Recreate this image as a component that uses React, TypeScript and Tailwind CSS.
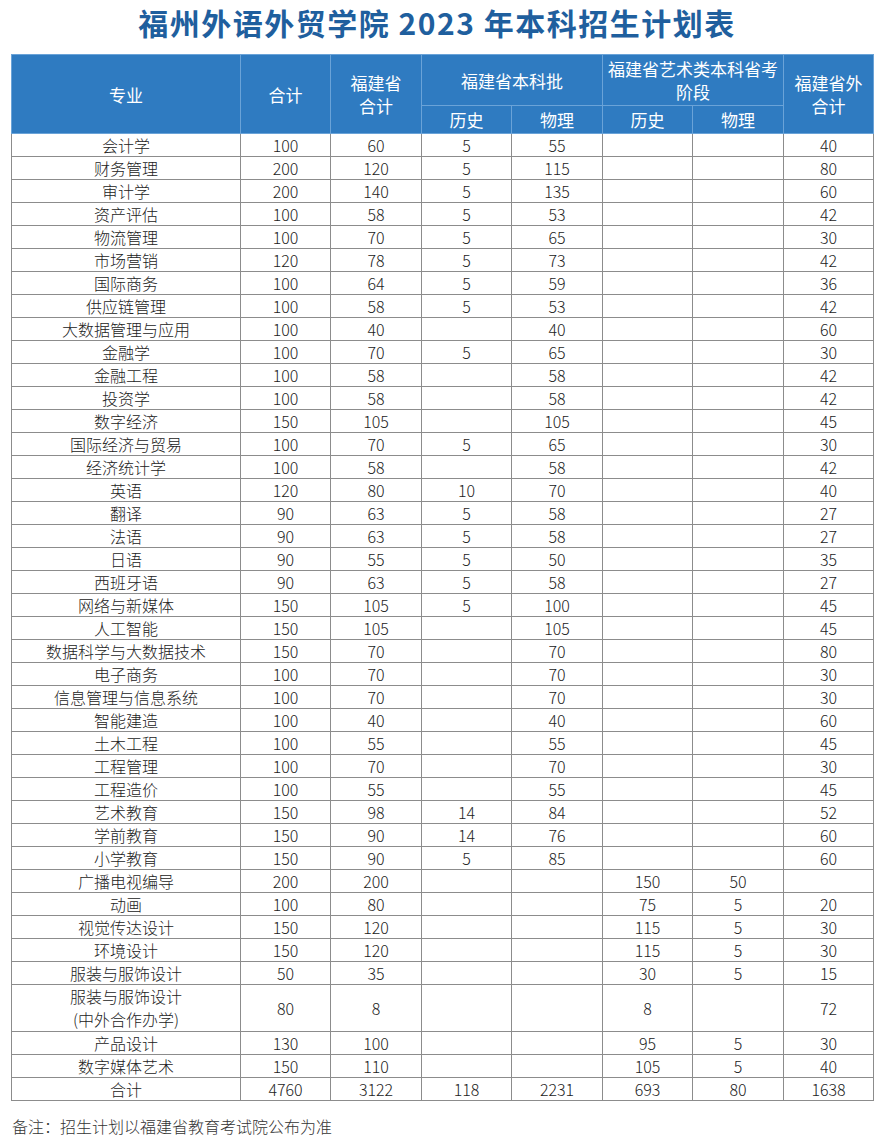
type Row = [string, string, string, string, string, string, string, string];

const rows: Row[] = [
  ["会计学", "100", "60", "5", "55", "", "", "40"],
  ["财务管理", "200", "120", "5", "115", "", "", "80"],
  ["审计学", "200", "140", "5", "135", "", "", "60"],
  ["资产评估", "100", "58", "5", "53", "", "", "42"],
  ["物流管理", "100", "70", "5", "65", "", "", "30"],
  ["市场营销", "120", "78", "5", "73", "", "", "42"],
  ["国际商务", "100", "64", "5", "59", "", "", "36"],
  ["供应链管理", "100", "58", "5", "53", "", "", "42"],
  ["大数据管理与应用", "100", "40", "", "40", "", "", "60"],
  ["金融学", "100", "70", "5", "65", "", "", "30"],
  ["金融工程", "100", "58", "", "58", "", "", "42"],
  ["投资学", "100", "58", "", "58", "", "", "42"],
  ["数字经济", "150", "105", "", "105", "", "", "45"],
  ["国际经济与贸易", "100", "70", "5", "65", "", "", "30"],
  ["经济统计学", "100", "58", "", "58", "", "", "42"],
  ["英语", "120", "80", "10", "70", "", "", "40"],
  ["翻译", "90", "63", "5", "58", "", "", "27"],
  ["法语", "90", "63", "5", "58", "", "", "27"],
  ["日语", "90", "55", "5", "50", "", "", "35"],
  ["西班牙语", "90", "63", "5", "58", "", "", "27"],
  ["网络与新媒体", "150", "105", "5", "100", "", "", "45"],
  ["人工智能", "150", "105", "", "105", "", "", "45"],
  ["数据科学与大数据技术", "150", "70", "", "70", "", "", "80"],
  ["电子商务", "100", "70", "", "70", "", "", "30"],
  ["信息管理与信息系统", "100", "70", "", "70", "", "", "30"],
  ["智能建造", "100", "40", "", "40", "", "", "60"],
  ["土木工程", "100", "55", "", "55", "", "", "45"],
  ["工程管理", "100", "70", "", "70", "", "", "30"],
  ["工程造价", "100", "55", "", "55", "", "", "45"],
  ["艺术教育", "150", "98", "14", "84", "", "", "52"],
  ["学前教育", "150", "90", "14", "76", "", "", "60"],
  ["小学教育", "150", "90", "5", "85", "", "", "60"],
  ["广播电视编导", "200", "200", "", "", "150", "50", ""],
  ["动画", "100", "80", "", "", "75", "5", "20"],
  ["视觉传达设计", "150", "120", "", "", "115", "5", "30"],
  ["环境设计", "150", "120", "", "", "115", "5", "30"],
  ["服装与服饰设计", "50", "35", "", "", "30", "5", "15"],
  ["服装与服饰设计\n(中外合作办学)", "80", "8", "", "", "8", "", "72"],
  ["产品设计", "130", "100", "", "", "95", "5", "30"],
  ["数字媒体艺术", "150", "110", "", "", "105", "5", "40"],
  ["合计", "4760", "3122", "118", "2231", "693", "80", "1638"],
];

const th = "border border-[#6aa3d8] font-normal text-white text-[17px] leading-[23px] align-middle";
const td = "border border-[#8c8c8c] text-center align-middle p-0";

export default function App() {
  return (
    <div
      className="w-[874px] h-[1142px] bg-white overflow-hidden"
      style={{ fontFamily: '"Noto Sans CJK SC", "Noto Sans", sans-serif' }}
    >
      <h1 className="h-[46px] pt-[2px] text-center text-[30px] leading-[40px] font-bold tracking-[1.5px] text-[#1f5f9e]">
        福州外语外贸学院 2023 年本科招生计划表
      </h1>
      <div className="pl-[11px] pt-[8px]">
        <table className="border-collapse table-fixed w-[861px] text-[16px] text-[#222] font-light">
          <colgroup>
            <col className="w-[229px]" />
            <col className="w-[90px]" />
            <col className="w-[91px]" />
            <col className="w-[90px]" />
            <col className="w-[91px]" />
            <col className="w-[90px]" />
            <col className="w-[91px]" />
            <col className="w-[90px]" />
          </colgroup>
          <thead className="bg-[#2f7bc1]">
            <tr className="h-[51px]">
              <th rowSpan={2} className={th}>专业</th>
              <th rowSpan={2} className={th}>合计</th>
              <th rowSpan={2} className={th}>福建省<br />合计</th>
              <th colSpan={2} className={th}>福建省本科批</th>
              <th colSpan={2} className={`${th} px-1`}>福建省艺术类本科省考<br />阶段</th>
              <th rowSpan={2} className={th}>福建省外<br />合计</th>
            </tr>
            <tr className="h-[28px]">
              <th className={th}>历史</th>
              <th className={th}>物理</th>
              <th className={th}>历史</th>
              <th className={th}>物理</th>
            </tr>
          </thead>
          <tbody>
            {rows.map((r, i) => {
              const double = r[0].includes("\n");
              return (
                <tr key={i} className={double ? "h-[47px]" : "h-[23px]"}>
                  {r.map((c, j) => (
                    <td key={j} className={`${td} ${double ? "leading-[23px]" : "leading-[21px]"}`}>
                      {c.split("\n").map((line, k) => (
                        <div key={k}>{line}</div>
                      ))}
                    </td>
                  ))}
                </tr>
              );
            })}
          </tbody>
        </table>
      </div>
      <p className="pl-[12px] pt-[14px] text-[16px] leading-[22px] text-[#333] font-light">
        备注：招生计划以福建省教育考试院公布为准
      </p>
    </div>
  );
}
